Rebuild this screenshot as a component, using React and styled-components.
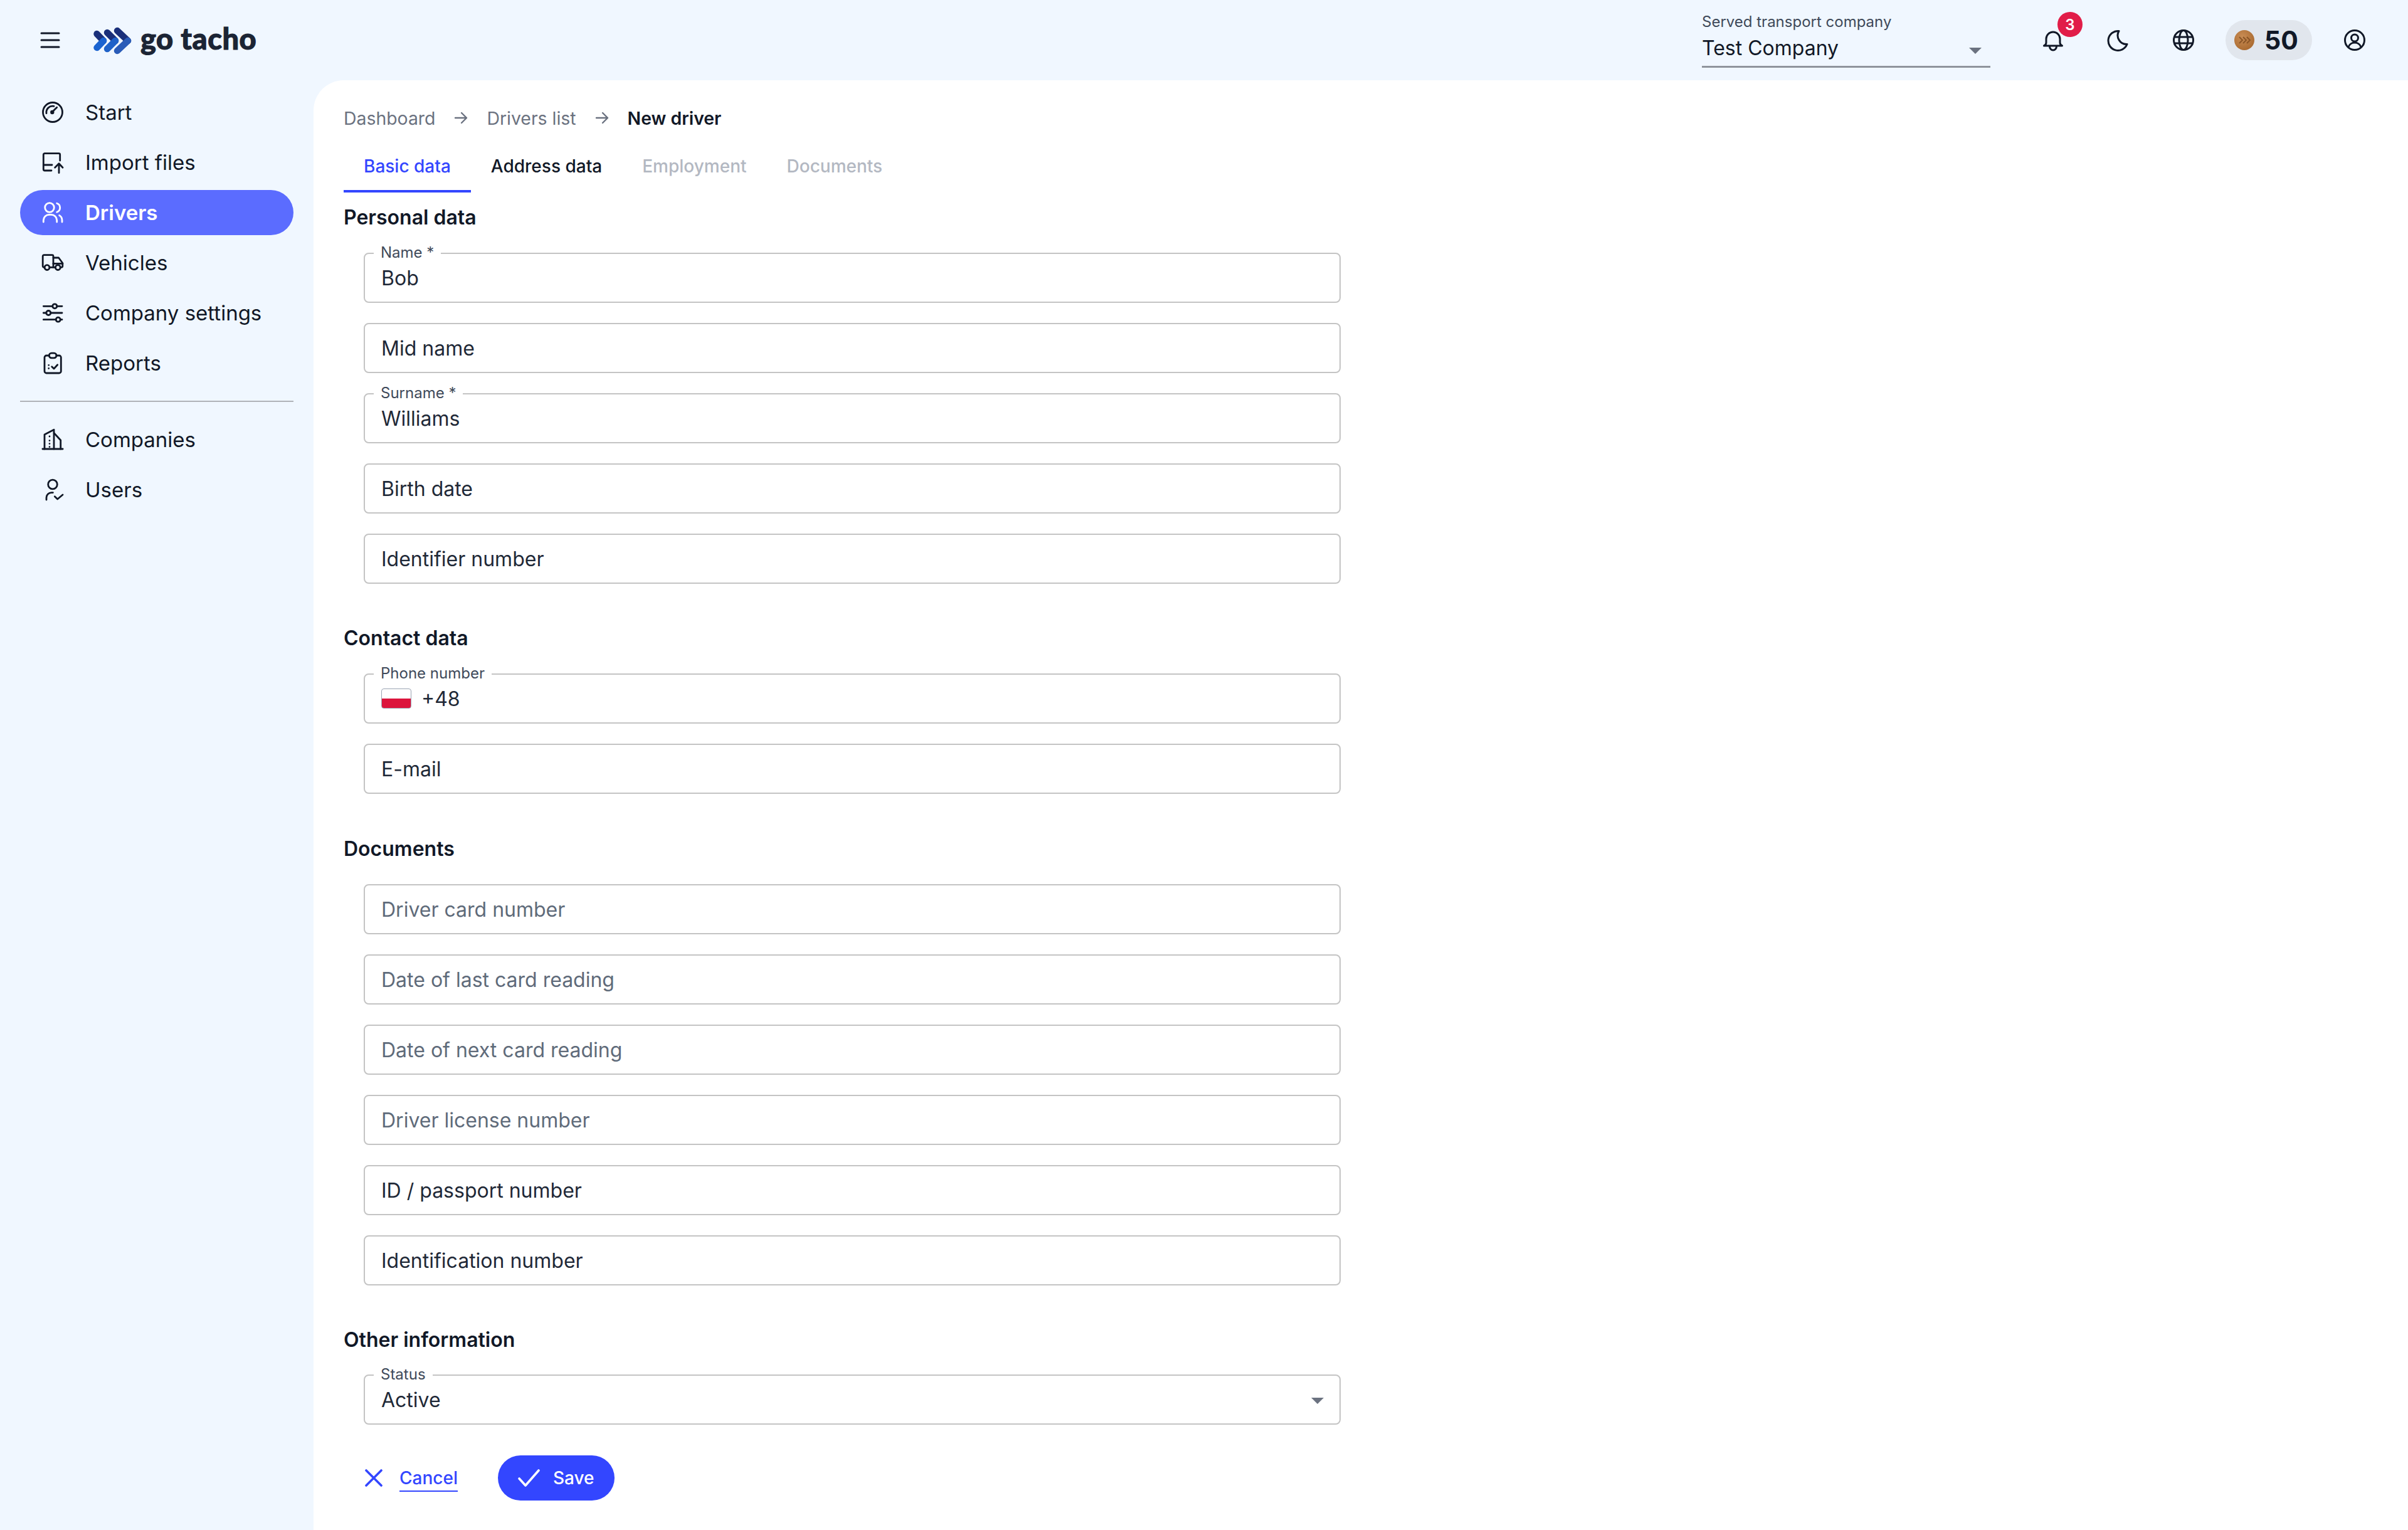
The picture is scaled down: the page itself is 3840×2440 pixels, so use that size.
import React from "react";
import styled, { createGlobalStyle } from "styled-components";

const Global = createGlobalStyle`
  html, body { margin: 0; padding: 0; background: #f0f7ff; }
  body { font-family: Inter, "Noto Sans", sans-serif; color: #111827; }
  * { box-sizing: border-box; }
`;

const Page = styled.div`
  width: 3840px;
  height: 2440px;
  display: flex;
  flex-direction: column;
  overflow: hidden;
  background: #f0f7ff;
`;

/* ---------- header ---------- */
const Header = styled.header`
  height: 128px;
  flex: none;
  display: flex;
  align-items: center;
  padding-left: 63px;
`;
const Burger = styled.svg`
  width: 34px;
  height: 34px;
  flex: none;
  color: #111827;
`;
const LogoMark = styled.svg`
  width: 62px;
  height: 44px;
  margin-left: 52px;
  margin-top: 2px;
  flex: none;
`;
const LogoText = styled.span`
  font-family: Lato, sans-serif;
  font-weight: 900;
  font-size: 47px;
  line-height: 1;
  letter-spacing: 0.5px;
  color: #1b2434;
  margin-left: 13px;
  margin-top: -6px;
  -webkit-text-stroke: 1px #1b2434;
`;
const HeaderRight = styled.div`
  margin-left: auto;
  display: flex;
  align-items: center;
  height: 100%;
`;
const CompanySelect = styled.div`
  width: 460px;
  height: 108px;
  margin-top: -20px;
  margin-right: 82px;
  display: flex;
  flex-direction: column;
  border-bottom: 3px solid #8f949c;
  position: relative;
`;
const CompanyLabel = styled.span`
  margin-top: 21px;
  font-size: 24px;
  line-height: 28px;
  color: #3f4a5a;
`;
const CompanyValue = styled.span`
  margin-top: 8px;
  font-size: 32px;
  line-height: 40px;
  color: #111827;
`;
const Caret = styled.span`
  position: absolute;
  right: ${(p) => p.$right}px;
  bottom: ${(p) => p.$bottom}px;
  width: 0;
  height: 0;
  border-left: 10px solid transparent;
  border-right: 10px solid transparent;
  border-top: 10px solid #6b7280;
`;
const IconSlot = styled.div`
  width: 36px;
  height: 36px;
  flex: none;
  margin-left: ${(p) => p.$ml || 0}px;
  margin-right: ${(p) => p.$mr || 0}px;
  position: relative;
  color: #111827;
  display: flex;
`;
const Badge = styled.span`
  position: absolute;
  left: 25px;
  top: -27px;
  width: 40px;
  height: 40px;
  border-radius: 50%;
  background: #e11d48;
  color: #fff;
  font-size: 24px;
  font-weight: 600;
  display: flex;
  align-items: center;
  justify-content: center;
`;
const CoinPill = styled.div`
  width: 138px;
  height: 64px;
  border-radius: 32px;
  background: #e1e6ed;
  margin-left: 49px;
  display: flex;
  align-items: center;
  padding-left: 14px;
  gap: 16px;
`;
const CoinValue = styled.span`
  font-size: 41px;
  font-weight: 700;
  line-height: 1;
  color: #111827;
`;
const HeaderIcon = styled.svg`
  width: 36px;
  height: 36px;
  fill: none;
  stroke: currentColor;
  stroke-width: 3;
  stroke-linecap: round;
  stroke-linejoin: round;
`;

/* ---------- body ---------- */
const Body = styled.div`
  flex: 1;
  display: flex;
  min-height: 0;
`;
const Sidebar = styled.nav`
  width: 500px;
  flex: none;
  padding: 15px 32px 0;
  display: flex;
  flex-direction: column;
`;
const NavGroup = styled.div`
  display: flex;
  flex-direction: column;
  gap: 8px;
`;
const NavItem = styled.div`
  height: 72px;
  border-radius: 36px;
  display: flex;
  align-items: center;
  padding-left: 35px;
  gap: 35px;
  font-size: 33px;
  font-weight: ${(p) => (p.$active ? 600 : 400)};
  color: ${(p) => (p.$active ? "#fff" : "#111827")};
  background: ${(p) => (p.$active ? "#5b6cff" : "transparent")};
`;
const NavIcon = styled.svg`
  width: 34px;
  height: 34px;
  flex: none;
  fill: none;
  overflow: visible;
  stroke: currentColor;
  stroke-width: 2.8;
  stroke-linecap: round;
  stroke-linejoin: round;
`;
const Divider = styled.div`
  height: 2px;
  background: #b0b3b8;
  margin: 24px 0 24px;
`;

const Main = styled.main`
  flex: 1;
  background: #fff;
  border-top-left-radius: 48px;
  padding: 40px 0 0 48px;
  display: flex;
  flex-direction: column;
`;
const Crumbs = styled.div`
  display: flex;
  align-items: center;
  height: 40px;
  font-size: 28.4px;
`;
const Crumb = styled.span`
  color: ${(p) => (p.$current ? "#111827" : "#6b7280")};
  font-weight: ${(p) => (p.$current ? 600 : 400)};
`;
const CrumbArrow = styled.svg`
  width: 22px;
  height: 20px;
  margin: 0 30px;
  flex: none;
  fill: none;
  stroke: #6b7280;
  stroke-width: 2.4;
  stroke-linecap: round;
  stroke-linejoin: round;
`;
const Tabs = styled.div`
  display: flex;
  margin-top: 15px;
  height: 84px;
`;
const Tab = styled.div`
  padding: 4px 32px 0;
  display: flex;
  align-items: center;
  font-size: 28px;
  font-weight: 500;
  border-bottom: 4px solid ${(p) => (p.$active ? "#3346ff" : "transparent")};
  color: ${(p) =>
    p.$active ? "#3346ff" : p.$disabled ? "#b3b8c2" : "#111827"};
`;
const Heading = styled.h2`
  margin: ${(p) => p.$top}px 0 0;
  font-size: 32px;
  line-height: 40px;
  font-weight: 600;
  color: #111827;
`;
const FieldList = styled.div`
  margin: ${(p) => p.$top ?? 36}px 0 0 32px;
  width: 1558px;
  display: flex;
  flex-direction: column;
  gap: 32px;
`;
const Field = styled.div`
  position: relative;
  height: 80px;
  border: 2px solid #c4c4c4;
  border-radius: 8px;
  display: flex;
  align-items: flex-start;
  padding: 19px 26px 0;
  gap: 16px;
  font-size: 32px;
  line-height: 40px;
  color: ${(p) => (p.$muted ? "#5f6b7a" : "#1f2937")};
`;
const FieldLabel = styled.span`
  position: absolute;
  left: 14px;
  top: -16px;
  padding: 0 11px;
  background: #fff;
  font-size: 24px;
  line-height: 28px;
  color: #3f4a5a;
`;
const Flag = styled.span`
  width: 48px;
  height: 32px;
  border-radius: 4px;
  margin-top: 3px;
  border: 1px solid #9aa3b2;
  background: linear-gradient(#fff 50%, #dc143c 50%);
`;

const Actions = styled.div`
  display: flex;
  align-items: center;
  margin: 49px 0 0 34px;
`;
const CancelLink = styled.span`
  font-size: 28px;
  font-weight: 500;
  line-height: 36px;
  color: #3346ff;
  margin-left: 27px;
  border-bottom: 2px solid #3346ff;
  margin-top: 4px;
  padding-bottom: 2px;
`;
const CancelIcon = styled.svg`
  width: 28px;
  height: 28px;
  fill: none;
  stroke: #3346ff;
  stroke-width: 3.6;
  stroke-linecap: round;
`;
const SaveButton = styled.button`
  height: 72px;
  width: 186px;
  margin-left: 64px;
  border: 0;
  border-radius: 36px;
  background: #3346ff;
  color: #fff;
  font-family: inherit;
  font-size: 28px;
  font-weight: 500;
  display: flex;
  align-items: center;
  padding: 0 0 0 32px;
  gap: 20px;
`;
const SaveIcon = styled.svg`
  width: 36px;
  height: 28px;
  fill: none;
  stroke: #fff;
  stroke-width: 3.6;
  stroke-linecap: round;
  stroke-linejoin: round;
`;

const NAV_ICONS = {
  start: (
    <>
      <circle cx="17" cy="17" r="15.5" />
      <path d="M7 18.7A10 10 0 0 1 19 7.4" />
      <path d="M16.3 16.6 23.7 9.3" />
      <circle cx="16.3" cy="17" r="1.8" fill="currentColor" />
    </>
  ),
  import: (
    <>
      <path d="M28.7 14V4.7a2 2 0 0 0-2-2H4.3a2 2 0 0 0-2 2V28a2 2 0 0 0 2 2H15" />
      <path d="M2.3 21H16" />
      <path d="M27 33.7V19M20.6 25.2 27 18.8l6 6.4" />
    </>
  ),
  drivers: (
    <>
      <circle cx="12" cy="9" r="7.3" />
      <path d="M23.7 2.2a7.4 7.4 0 0 1 0 14" />
      <path d="M2.3 32v-2.7a9 9 0 0 1 9-9h3.4a9 9 0 0 1 9 9V32" />
      <path d="M27.6 21.4a9 9 0 0 1 4.4 7.6V32" />
    </>
  ),
  vehicles: (
    <>
      <path d="M4 24.3H3.2a2 2 0 0 1-2-2V6.7a2 2 0 0 1 2-2H16a2 2 0 0 1 2 2v17.6h-6" />
      <path d="M18 9h8.5l6.3 8.5v4.8a2 2 0 0 1-2 2h-1.5M21.3 24.3H18" />
      <path d="M18 18.3h14.8" />
      <circle cx="8" cy="24.6" r="3.9" />
      <circle cx="25.3" cy="24.6" r="3.9" />
    </>
  ),
  settings: (
    <>
      <path d="M2.3 6.3h14.4M24 6.3h8M2.3 17h4.4M14 17h18M2.3 27.7h19.8M29.4 27.7h2.6" />
      <circle cx="20.3" cy="6.3" r="3.5" />
      <circle cx="10.3" cy="17" r="3.5" />
      <circle cx="25.7" cy="27.7" r="3.5" />
    </>
  ),
  reports: (
    <>
      <path d="M11 5H7a3 3 0 0 0-3 3v22a3 3 0 0 0 3 3h20.3a3 3 0 0 0 3-3V8a3 3 0 0 0-3-3H23" />
      <rect x="11.3" y="1.2" width="11.7" height="7.6" rx="3.8" />
      <path d="M15.7 22.7 19 26l5.7-6.3" />
      <path d="M10.7 20.3v.01M10.7 25.5v.01" />
    </>
  ),
  companies: (
    <>
      <path d="M.9 32h32.2" />
      <path d="M4 32V9L19 1.2V32" />
      <path d="M19 6.5 29.7 18V32" />
      <path d="M12 12v.01M12 18.6v.01M12 23.6v.01M12 28.6v.01" />
    </>
  ),
  users: (
    <>
      <circle cx="17" cy="8.5" r="7.3" />
      <path d="M7 33v-3.4a8 8 0 0 1 8-8h2.4" />
      <path d="M20.3 27.7 24.7 32 33 25" />
    </>
  ),
};

const Nav = ({ icon, active, children }) => (
  <NavItem $active={active}>
    <NavIcon viewBox="0 0 34 34">{NAV_ICONS[icon]}</NavIcon>
    {children}
  </NavItem>
);

const TextField = ({ label, value, muted, children }) => (
  <Field $muted={muted}>
    {label && <FieldLabel>{label}</FieldLabel>}
    {children}
    <span>{value}</span>
  </Field>
);

const Logo = () => (
  <LogoMark viewBox="0 0 62 44">
    <g fill="none" strokeWidth="10.5" strokeLinecap="round">
      <path d="M5.5 11 L16 22" stroke="#1a2f7a" />
      <path d="M22 9 L35 22" stroke="#1a2f7a" />
      <path d="M38 6 L55 22" stroke="#1a2f7a" />
      <path d="M16 22 L5.5 33" stroke="#1a63d0" />
      <path d="M35 22 L22 35" stroke="#1f62c8" />
      <path d="M55 22 L38 38" stroke="#2a5cb8" />
    </g>
  </LogoMark>
);

const Arrow = () => (
  <CrumbArrow viewBox="0 0 22 20">
    <path d="M2 10h18M12 2l8 8-8 8" />
  </CrumbArrow>
);

export default function App() {
  return (
    <Page>
      <Global />
      <Header>
        <Burger viewBox="0 0 34 34" fill="none" stroke="currentColor" strokeWidth="3" strokeLinecap="round">
          <path d="M3 6h28M3 17h28M3 28h28" />
        </Burger>
        <Logo />
        <LogoText>go tacho</LogoText>
        <HeaderRight>
          <CompanySelect>
            <CompanyLabel>Served transport company</CompanyLabel>
            <CompanyValue>Test Company</CompanyValue>
            <Caret $right={14} $bottom={19} />
          </CompanySelect>
          <IconSlot>
            <HeaderIcon viewBox="0 0 36 36">
              <path d="M3.5 27c1.5-.6 3.5-2 3.5-5v-6a11 11 0 0 1 22 0v6c0 3 2 4.400 3.500 5z" />
              <path d="M12.500 28a5.500 6 0 0 0 11 0" />
            </HeaderIcon>
            <Badge>3</Badge>
          </IconSlot>
          <IconSlot $ml={66}>
            <HeaderIcon viewBox="0 0 36 36">
              <path d="M21 3.500A15.500 15.500 0 1 0 34 24.500A14 14 0 0 1 21 3.500Z" />
            </HeaderIcon>
          </IconSlot>
          <IconSlot $ml={70}>
            <HeaderIcon viewBox="0 0 36 36">
              <circle cx="18" cy="18" r="15.500" />
              <ellipse cx="18" cy="18" rx="7" ry="15.500" />
              <path d="M3.500 13h29M3.500 23h29" />
            </HeaderIcon>
          </IconSlot>
          <CoinPill>
            <svg width="32" height="32" viewBox="0 0 32 32">
              <defs>
                <radialGradient id="coin" cx="0.4" cy="0.35" r="0.7">
                  <stop offset="0" stopColor="#c98d55" />
                  <stop offset="1" stopColor="#a9692f" />
                </radialGradient>
              </defs>
              <circle cx="16" cy="16" r="16" fill="url(#coin)" />
              <path d="M8 11l5 5-5 5M14 11l5 5-5 5M20 11l5 5-5 5" fill="none" stroke="#8a5526" strokeWidth="2" />
            </svg>
            <CoinValue>50</CoinValue>
          </CoinPill>
          <IconSlot $ml={50} $mr={67}>
            <HeaderIcon viewBox="0 0 36 36">
              <circle cx="18" cy="18" r="15.500" />
              <circle cx="18" cy="14.500" r="5.500" />
              <path d="M8 29a10.500 10 0 0 1 20 0" />
            </HeaderIcon>
          </IconSlot>
        </HeaderRight>
      </Header>
      <Body>
        <Sidebar>
          <NavGroup>
            <Nav icon="start">Start</Nav>
            <Nav icon="import">Import files</Nav>
            <Nav icon="drivers" active>Drivers</Nav>
            <Nav icon="vehicles">Vehicles</Nav>
            <Nav icon="settings">Company settings</Nav>
            <Nav icon="reports">Reports</Nav>
          </NavGroup>
          <Divider />
          <NavGroup>
            <Nav icon="companies">Companies</Nav>
            <Nav icon="users">Users</Nav>
          </NavGroup>
        </Sidebar>
        <Main>
          <Crumbs>
            <Crumb>Dashboard</Crumb>
            <Arrow />
            <Crumb>Drivers list</Crumb>
            <Arrow />
            <Crumb $current>New driver</Crumb>
          </Crumbs>
          <Tabs>
            <Tab $active>Basic data</Tab>
            <Tab>Address data</Tab>
            <Tab $disabled>Employment</Tab>
            <Tab $disabled>Documents</Tab>
          </Tabs>
          <Heading $top={20}>Personal data</Heading>
          <FieldList>
            <TextField label="Name *" value="Bob" />
            <TextField value="Mid name" />
            <TextField label="Surname *" value="Williams" />
            <TextField value="Birth date" />
            <TextField value="Identifier number" />
          </FieldList>
          <Heading $top={67}>Contact data</Heading>
          <FieldList>
            <TextField label="Phone number" value="+48"><Flag /></TextField>
            <TextField value="E-mail" />
          </FieldList>
          <Heading $top={68}>Documents</Heading>
          <FieldList>
            <TextField muted value="Driver card number" />
            <TextField muted value="Date of last card reading" />
            <TextField muted value="Date of next card reading" />
            <TextField muted value="Driver license number" />
            <TextField value="ID / passport number" />
            <TextField value="Identification number" />
          </FieldList>
          <Heading $top={67}>Other information</Heading>
          <FieldList $top={35}>
            <TextField label="Status" value="Active">
              <Caret $right={25} $bottom={31} />
            </TextField>
          </FieldList>
          <Actions>
            <CancelIcon viewBox="0 0 28 28"><path d="M2 2l24 24M26 2 2 26" /></CancelIcon>
            <CancelLink>Cancel</CancelLink>
            <SaveButton>
              <SaveIcon viewBox="0 0 36 28"><path d="M2 15l10 11L33 2" /></SaveIcon>
              Save
            </SaveButton>
          </Actions>
        </Main>
      </Body>
    </Page>
  );
}
